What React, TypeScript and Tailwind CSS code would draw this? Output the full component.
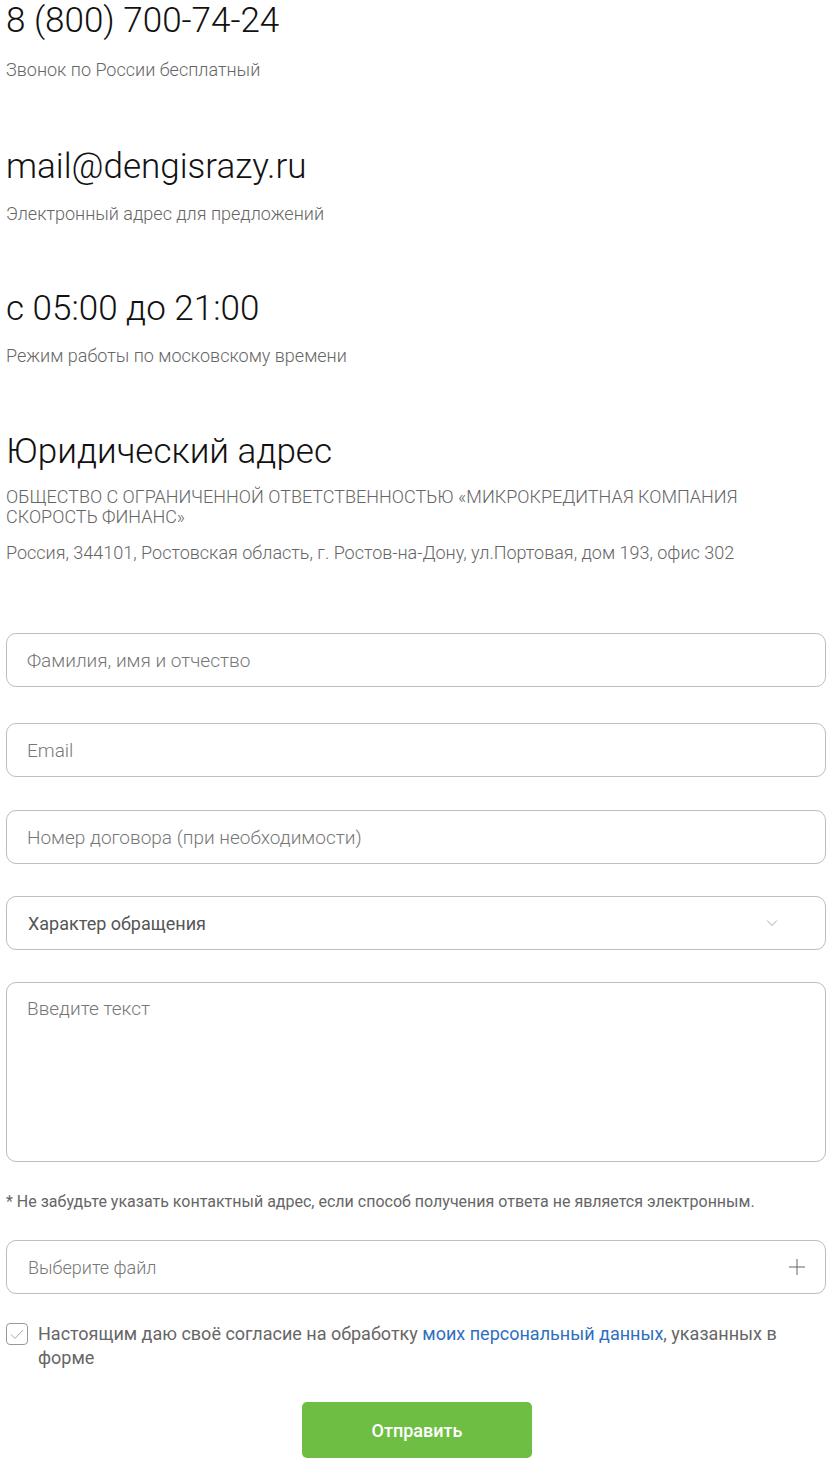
import React from "react";

const font = { fontFamily: "Roboto, 'Noto Sans', sans-serif" };

function InfoBlock({ title, sub, className = "" }: { title: string; sub: string; className?: string }) {
  return (
    <div className={className}>
      <div className="text-[35px] leading-[42px] font-light text-[#111]">{title}</div>
      <div className="mt-[14px] text-[18px] leading-[24px] font-light text-[#666]">{sub}</div>
    </div>
  );
}

export default function App() {
  return (
    <div className="w-[834px] bg-white px-[6px] pb-[19px]" style={font}>
      <div>
        <div className="text-[35px] leading-[42px] font-light text-[#111]">8 (800) 700-74-24</div>
        <div className="mt-[16px] text-[18px] leading-[24px] font-light text-[#666]">Звонок по России бесплатный</div>
      </div>
      <InfoBlock className="mt-[64px]" title="mail@dengisrazy.ru" sub="Электронный адрес для предложений" />
      <InfoBlock className="mt-[62px]" title="с 05:00 до 21:00" sub="Режим работы по московскому времени" />

      <div className="mt-[63px]">
        <div className="text-[35px] leading-[42px] font-light text-[#111]">Юридический адрес</div>
        <div className="mt-[14px] text-[18px] leading-[20px] font-light text-[#666] uppercase">
          Общество с ограниченной ответственностью «Микрокредитная компания Скорость Финанс»
        </div>
        <div className="mt-[14px] text-[18px] leading-[24px] font-light text-[#666]">
          Россия, 344101, Ростовская область, г. Ростов-на-Дону, ул.Портовая, дом 193, офис 302
        </div>
      </div>

      <form className="mt-[68px] flex flex-col">
        <input
          className="h-[54px] w-[820px] rounded-[10px] border border-[#bdbdbd] px-[20px] text-[19px] font-light text-[#333] placeholder:text-[#777] outline-none"
          placeholder="Фамилия, имя и отчество"
        />
        <input
          className="mt-[36px] h-[54px] w-[820px] rounded-[10px] border border-[#bdbdbd] px-[20px] text-[19px] font-light text-[#333] placeholder:text-[#777] outline-none"
          placeholder="Email"
        />
        <input
          className="mt-[33px] h-[54px] w-[820px] rounded-[10px] border border-[#bdbdbd] px-[20px] text-[19px] font-light text-[#333] placeholder:text-[#777] outline-none"
          placeholder="Номер договора (при необходимости)"
        />
        <div className="mt-[32px] flex h-[54px] w-[820px] items-center justify-between rounded-[10px] border border-[#bdbdbd] pl-[21px] pr-[47px]">
          <span className="text-[18px] text-[#555]">Характер обращения</span>
          <svg width="12" height="8" viewBox="0 0 12 8" fill="none">
            <path d="M1 1.5 L6 6.5 L11 1.5" stroke="#aaa" strokeWidth="1" />
          </svg>
        </div>
        <textarea
          className="mt-[32px] h-[180px] w-[820px] resize-none rounded-[10px] border border-[#bdbdbd] px-[20px] pt-[12px] text-[19px] font-light text-[#333] placeholder:text-[#777] outline-none"
          placeholder="Введите текст"
        />
        <p className="mt-[30px] text-[16px] leading-[20px] text-[#666]">
          * Не забудьте указать контактный адрес, если способ получения ответа не является электронным.
        </p>
        <div className="mt-[28px] flex h-[54px] w-[820px] items-center justify-between rounded-[10px] border border-[#bdbdbd] pl-[21px] pr-[20px]">
          <span className="text-[18px] font-light text-[#777]">Выберите файл</span>
          <svg width="16" height="16" viewBox="0 0 16 16" fill="none">
            <path d="M8 0 V16 M0 8 H16" stroke="#666" strokeWidth="1" />
          </svg>
        </div>
        <div className="mt-[28px] flex items-start gap-[10px]">
          <div className="mt-[1px] flex h-[22px] w-[22px] shrink-0 items-center justify-center rounded-[4px] border border-[#999]">
            <svg width="14" height="11" viewBox="0 0 14 11" fill="none">
              <path d="M1 5.5 L5 9.5 L13 1" stroke="#aaa" strokeWidth="1" />
            </svg>
          </div>
          <p className="text-[18px] leading-[24px] text-[#666]">
            Настоящим даю своё согласие на обработку{" "}
            <a className="text-[#2f6fc0]">моих персональный данных</a>, указанных в форме
          </p>
        </div>
        <div className="mt-[32px] flex justify-center">
          <button
            type="button"
            className="h-[56px] w-[230px] rounded-[5px] bg-[#6fbe44] text-[18px] font-medium text-white"
          >
            Отправить
          </button>
        </div>
      </form>
    </div>
  );
}
